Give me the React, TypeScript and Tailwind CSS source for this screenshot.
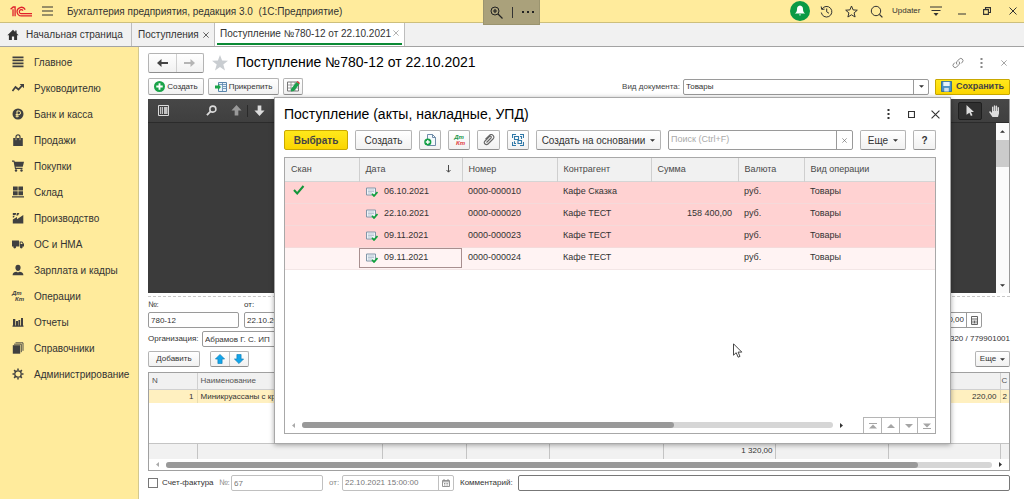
import React from 'react';
import clsx from 'clsx';

const Svg: React.FC<{ className?: string; box?: string; children: React.ReactNode }> = ({
  className = 'size-3',
  box = '0 0 12 12',
  children,
}) => (
  <svg viewBox={box} className={clsx('shrink-0', className)} fill="currentColor" aria-hidden="true">
    {children}
  </svg>
);

/* ---------- shared controls ---------- */

const btn =
  'flex shrink-0 items-center justify-center rounded-[2px] border border-[#b4b4b4] border-b-[#8f8f8f] bg-linear-to-b from-white to-[#f1f1f1]';

const field = 'rounded-[2px] border border-[#9a9a9a] bg-white';

const Caret: React.FC = () => (
  <Svg className="h-[3px] w-[5px]" box="0 0 6 3">
    <path d="M0 0h6L3 3z" />
  </Svg>
);

const Dots: React.FC = () => (
  <Svg className="h-[10px] w-[3px]" box="0 0 3 10">
    <path d="M.5 0h2v2h-2zM.5 4h2v2h-2zM.5 8h2v2h-2z" />
  </Svg>
);

const Cross: React.FC<{ className?: string }> = ({ className = 'size-2' }) => (
  <Svg className={className} box="0 0 8 8">
    <path d="M.5.5l7 7M7.5.5l-7 7" stroke="currentColor" strokeWidth="1" fill="none" />
  </Svg>
);

const DtKt: React.FC<{ className: string; second?: string }> = ({ className, second }) => (
  <span className={clsx('flex flex-col font-bold italic', className)} aria-hidden="true">
    <span>Дт</span>
    <span className={clsx('self-end', second)}>Кт</span>
  </span>
);

/* ---------- sections panel ---------- */

const sections: { label: string; icon: React.ReactNode }[] = [
  { label: 'Главное', icon: <Svg><path d="M.5.5h11v1.8H.5zM.5 3.4h11v1.8H.5zM.5 6.4h11v1.8H.5zM.5 9.4h11v1.8H.5z" /></Svg> },
  {
    label: 'Руководителю',
    icon: (
      <Svg>
        <path d="M.5 9l3-4 3 2.5L10 3.6" fill="none" stroke="currentColor" strokeWidth="1.7" />
        <path d="M7.6 2H12v4.3z" />
      </Svg>
    ),
  },
  {
    label: 'Банк и касса',
    icon: (
      <Svg>
        <circle cx="6" cy="6" r="5.5" />
        <path d="M5 9.5V3h1.8a1.7 1.7 0 010 3.6H3.6M3.6 8.2h3.2" fill="none" stroke="#ffeb9c" strokeWidth="1" />
      </Svg>
    ),
  },
  {
    label: 'Продажи',
    icon: (
      <Svg>
        <path d="M1.2 4h9.6v8H1.2z" />
        <path d="M4 6V2.8a2 2 0 014 0V6" fill="none" stroke="currentColor" strokeWidth="1.2" />
        <path d="M4 4.3v1.9M8 4.3v1.9" stroke="#ffeb9c" strokeWidth=".7" />
      </Svg>
    ),
  },
  {
    label: 'Покупки',
    icon: (
      <Svg>
        <path d="M0 .6h2.3l.5 1.2H12l-1.2 5H3.6l.3 1h6.6v1.1H3L1.6 1.8H0z" />
        <circle cx="4" cy="10.5" r="1.2" />
        <circle cx="9.5" cy="10.5" r="1.2" />
      </Svg>
    ),
  },
  {
    label: 'Склад',
    icon: <Svg><path d="M1 .5h4.7v4H1zM6.4.5H11v4H6.4zM1 5.2h4.7v4H1zM6.4 5.2H11v4H6.4zM0 10.2h12v1.4H0z" /></Svg>,
  },
  {
    label: 'Производство',
    icon: <Svg><path d="M.8 11.5V7.5L5 5v2.2L11.3 3v8.5zM.8 1h3.4l-.6 2H.8zM5 1h2.4L6 3.4H4.3zM.8 3.8h2L1.8 5.6h-1z" /></Svg>,
  },
  {
    label: 'ОС и НМА',
    icon: (
      <Svg>
        <path d="M0 2.5h7v6H0zM7.6 3.5h2.6L12 6v2.5H7.6z" />
        <path d="M8.6 4.4h1.2l.9 1.5H8.6z" fill="#ffeb9c" />
        <circle cx="2.7" cy="9" r="1.4" />
        <circle cx="9.3" cy="9" r="1.4" />
      </Svg>
    ),
  },
  {
    label: 'Зарплата и кадры',
    icon: (
      <Svg>
        <path d="M6 .8c1.700 0 2.600 1.200 2.600 2.900S7.500 7 6 7 3.400 5.400 3.400 3.700 4.300.8 6 .8z" />
        <path d="M.6 11.300c0-2.300 1.400-3.200 4-3.500L6 8.600l1.400-.8c2.600.3 4 1.200 4 3.500z" />
      </Svg>
    ),
  },
  { label: 'Операции', icon: <DtKt className="w-3 text-[6px] leading-[6px]" /> },
  {
    label: 'Отчеты',
    icon: <Svg><path d="M1 3h2.300v7H1zM4 5h2v5H4zM6.400 4h1.800v6H6.400zM9 2h2v8H9zM.5 9.600h11v1.200H.5z" /></Svg>,
  },
  {
    label: 'Справочники',
    icon: (
      <Svg>
        <path d="M.8 3.200h7.400v8.500H.8z" />
        <path d="M2 2.200h7.300v8M3.500.8H11v8" fill="none" stroke="currentColor" strokeWidth=".9" />
      </Svg>
    ),
  },
  {
    label: 'Администрирование',
    icon: (
      <Svg>
        <circle cx="6" cy="6" r="3.200" fill="none" stroke="currentColor" strokeWidth="1.300" />
        <path
          d="M6 .5v2M6 9.500v2M.5 6h2M9.500 6h2M2.100 2.100l1.500 1.500M8.400 8.400l1.500 1.500M9.900 2.100L8.400 3.600M3.600 8.400L2.100 9.900"
          stroke="currentColor"
          strokeWidth="1.500"
        />
      </Svg>
    ),
  },
];

const SectionsPanel: React.FC = () => (
  <nav className="w-[139px] shrink-0 border-r border-[#d3c88f] bg-[#ffeb9c] pt-[2px]">
    <ul>
      {sections.map((s) => (
        <li key={s.label}>
          <a href="#" className="flex h-[26px] items-center gap-[10px] pl-3 text-[10px] text-[#333]">
            <span className="flex w-3 justify-center text-[#404040]">{s.icon}</span>
            {s.label}
          </a>
        </li>
      ))}
    </ul>
  </nav>
);

/* ---------- top bars ---------- */

const Logo: React.FC = () => (
  <svg viewBox="0 0 22 11" className="h-[11px] w-[22px] shrink-0" fill="none" stroke="#e0212b" aria-label="1С">
    <path d="M.6 3.300L3.200 1h1.900v9.200M3 3.200v7" strokeWidth="1.300" />
    <path d="M15.200 3.600A4.300 4.300 0 1011.300 9.900H22" strokeWidth="1.300" />
    <path d="M13 4.600A2 2 0 1011.300 7.700H22" strokeWidth="1.200" />
  </svg>
);

const TitleBar: React.FC = () => (
  <header className="relative flex h-[23px] shrink-0 items-center border-b border-[#cdbf7c] bg-[#ffeb9c] pl-[10px] pr-[7px] text-[#333]">
    <Logo />
    <button className="ml-[10px]" title="Меню">
      <Svg className="h-[10px] w-[11px]" box="0 0 11 10">
        <path d="M0 1h11M0 5h11M0 9h11" stroke="currentColor" strokeWidth="1" />
      </Svg>
    </button>
    <span className="ml-[14px] whitespace-pre text-[10px]">Бухгалтерия предприятия, редакция 3.0  (1С:Предприятие)</span>

    <div className="ml-auto flex items-center">
      <button className="flex size-5 items-center justify-center rounded-full bg-[#0b9a45] text-white" title="Уведомления">
        <Svg>
          <path d="M6 .6c2.200.4 3 1.800 3 3.600 0 2 .6 3.200 2.200 4.400H.8C2.400 7.400 3 6.200 3 4.200 3 2.400 3.800 1 6 .6zM4.800 9.400h2.400L6 10.800z" />
        </Svg>
      </button>
      <button className="ml-[10px]" title="История">
        <Svg className="size-[13px]" box="0 0 13 13">
          <path d="M2 4A5.300 5.300 0 111.300 7.500M1.200 1.500L1.700 4.400l2.900-.3M6.700 3.500v3.300l2.300 1.500" fill="none" stroke="currentColor" strokeWidth="1" />
        </Svg>
      </button>
      <button className="ml-3" title="Избранное">
        <Svg className="size-[13px]" box="0 0 13 13">
          <path d="M6.500 1l1.600 3.900 4.200.3-3.200 2.700 1 4.100-3.600-2.200L2.900 12l1-4.100L.7 5.200l4.200-.3z" fill="none" stroke="currentColor" strokeWidth="1" />
        </Svg>
      </button>
      <button className="ml-3" title="Поиск">
        <Svg className="size-[13px]" box="0 0 13 13">
          <circle cx="6" cy="6" r="4.700" fill="none" stroke="currentColor" strokeWidth="1" />
          <path d="M9.400 9.400l3 3" stroke="currentColor" strokeWidth="1.300" />
        </Svg>
      </button>
      <a href="#" className="ml-[9px] w-[30px] text-[8px]">Updater</a>
      <button className="ml-2" title="Настройка панелей">
        <Svg className="h-[10px] w-3" box="0 0 12 10">
          <path d="M0 1h12M1.500 4.500h9" stroke="currentColor" strokeWidth="1" />
          <path d="M3.500 7h5L6 10z" />
        </Svg>
      </button>
      <button className="ml-4" title="Свернуть">
        <Svg className="size-2" box="0 0 8 8"><path d="M0 6.500h8v1H0z" /></Svg>
      </button>
      <button className="ml-[17px]" title="Восстановить">
        <Svg className="size-2" box="0 0 8 8">
          <path d="M.6 2.600h4.800v4.800H.6zM2.500 2.600V.6h5v4.900h-2" fill="none" stroke="currentColor" strokeWidth="1.100" />
        </Svg>
      </button>
      <button className="ml-[18px]" title="Закрыть"><Cross /></button>
    </div>

    <div className="absolute left-[483px] top-0 z-20 flex h-[25px] w-[57px] items-center justify-center gap-[9px] border border-t-0 border-[#9b946f] bg-[#aaa17b] text-[#222]">
      <Svg className="size-[13px]" box="0 0 13 13">
        <circle cx="5" cy="5" r="4" fill="none" stroke="currentColor" strokeWidth="1" />
        <path d="M8 8l4.500 4.500M5 3v4M3 5h4" stroke="currentColor" strokeWidth="1.200" />
      </Svg>
      <span className="h-[11px] w-px bg-[#333]" />
      <Svg className="h-[2px] w-3" box="0 0 12 2"><path d="M0 0h2v2H0zM5 0h2v2H5zM10 0h2v2h-2z" /></Svg>
    </div>
  </header>
);

const TabsBar: React.FC = () => (
  <div className="flex h-6 shrink-0 whitespace-nowrap border-b border-[#a3a3a3] bg-[#f1f1f1] text-[10px] text-[#333]">
    <a href="#" className="flex w-[132px] shrink-0 items-center gap-[7px] border-r border-[#bdbdbd] pl-[7px]">
      <Svg className="size-3">
        <path d="M6 .8L.4 6.200h1.500V11h3V7.500h2.200V11h3V6.200h1.500L9.600 4.200V1.500H8.200v1.400z" />
      </Svg>
      Начальная страница
    </a>
    <div className="flex w-[83px] shrink-0 items-center justify-between border-r border-[#bdbdbd] pl-[6px] pr-[5px]">
      <a href="#">Поступления</a>
      <button title="Закрыть"><Cross className="size-[6px]" /></button>
    </div>
    <div className="flex w-[190px] shrink-0 border-r border-[#bdbdbd] bg-white px-[2px]">
      <div className="flex h-[22px] flex-1 items-center justify-between border-b-2 border-[#0b8a35] px-[3px]">
        <a href="#">Поступление №780-12 от 22.10.2021</a>
        <button className="text-[#999]" title="Закрыть"><Cross className="size-[6px]" /></button>
      </div>
    </div>
  </div>
);

/* ---------- document form ---------- */

const Arrow: React.FC<{ className?: string }> = ({ className }) => (
  <Svg className={clsx('h-2 w-[11px]', className)} box="0 0 11 8">
    <path d="M4.500 0v3H11v2H4.500v3L0 4z" />
  </Svg>
);

const DocumentHead: React.FC = () => (
  <div className="flex h-[31px] items-center">
    <div className="flex h-5 w-[56px] rounded-[2px] border border-[#b4b4b4] border-b-[#8f8f8f] bg-linear-to-b from-white to-[#f1f1f1]">
      <button className="flex flex-1 items-center justify-center border-r border-[#d0d0d0] text-[#444]" title="Назад"><Arrow /></button>
      <button className="flex flex-1 items-center justify-center text-[#b5b5b5]" title="Вперед"><Arrow className="rotate-180" /></button>
    </div>
    <button className="ml-2 text-[#c9cdd1]" title="В избранное">
      <Svg className="size-4" box="0 0 16 16"><path d="M8 0l2.100 5.600 5.900.2-4.700 3.700L13 15.500 8 12l-5 3.500 1.700-6L0 5.800l5.900-.2z" /></Svg>
    </button>
    <h1 className="ml-2 text-[14px] text-black">Поступление №780-12 от 22.10.2021</h1>
    <div className="ml-auto flex items-center text-[#888]">
      <button title="Ссылка">
        <Svg className="size-3">
          <path d="M5 7.500a2.300 2.300 0 010-3L7.300 2a2.200 2.200 0 013.200 3L9 6.500M7 4.500a2.300 2.300 0 010 3L4.700 10a2.200 2.200 0 01-3.200-3L3 5.500" fill="none" stroke="currentColor" strokeWidth="1" />
        </Svg>
      </button>
      <button className="ml-4" title="Еще"><Dots /></button>
      <button className="ml-[18px] mr-[3px]" title="Закрыть"><Cross className="size-[6px]" /></button>
    </div>
  </div>
);

const DocumentCommands: React.FC = () => (
  <div className="flex h-[17px] items-center text-[8px] text-[#333]">
    <button className={clsx(btn, 'h-[17px] w-[56px] gap-[2px]')}>
      <Svg className="size-[11px]">
        <circle cx="6" cy="6" r="6" fill="#19a348" />
        <path d="M6 2.500v7M2.500 6h7" stroke="#fff" strokeWidth="2" />
      </Svg>
      Создать
    </button>
    <button className={clsx(btn, 'ml-1 h-[17px] w-[71px] gap-[2px]')}>
      <Svg className="h-[10px] w-3" box="0 0 12 10">
        <path d="M3.500.5h8v9h-8z" fill="#eaf3fa" stroke="#5b87ad" />
        <path d="M4 2.500h7.500M7.500 1v8M8 4.500h3M8 6.500h3" stroke="#5b87ad" strokeWidth=".8" />
        <path d="M0 3.500h3V2l3 3-3 3V6.500H0z" fill="#19a348" />
      </Svg>
      Прикрепить
    </button>
    <button className={clsx(btn, 'ml-1 h-[17px] w-5')} title="Изменить">
      <Svg className="h-[11px] w-[13px]" box="0 0 13 11">
        <path d="M.5 1h11v9H.5z" fill="#fff" stroke="#777" />
        <path d="M1 4h10M1 7h10M4 1v9M8 1v9" stroke="#888" strokeWidth=".8" />
        <path d="M4 8l5.500-7 3 2L7 10l-3 .6z" fill="#1da04c" />
        <path d="M9.500 1l1-1L13 2l-.6 1z" fill="#d33" />
      </Svg>
    </button>
    <label htmlFor="docKind" className="ml-auto text-[#444]">Вид документа:</label>
    <div className={clsx(field, 'ml-[3px] flex h-4 w-[246px]')}>
      <select id="docKind" className="min-w-0 flex-1 appearance-none pl-[2px] outline-none">
        <option>Товары</option>
      </select>
      <span className="flex w-[15px] items-center justify-center border-l border-[#9a9a9a]"><Caret /></span>
    </div>
    <button className="ml-[6px] flex h-4 w-[75px] shrink-0 items-center justify-center gap-1 rounded-[1px] border border-[#c9a800] bg-linear-to-b from-[#ffe81a] to-[#fbd500] text-[9px] font-bold text-[#444]">
      <Svg className="size-[11px]">
        <path d="M.5.5h11v11h-11z" fill="#4a90c4" stroke="#2d6b98" />
        <path d="M2.500 1h7v4.500h-7z" fill="#e8f3fb" />
        <path d="M3.500 7.500h5v4h-5z" fill="#cfe0ee" />
      </Svg>
      Сохранить
    </button>
  </div>
);

const ScanViewer: React.FC = () => (
  <div className="mt-1 h-[194px] border-r border-[#999] bg-[#3b3b3b]">
    <div className="flex h-6 items-center border-b border-[#2b2b2b] bg-linear-to-b from-[#474747] to-[#3f3f3f] pl-[10px] pr-[8px] text-[#dcdcdc]">
      <button title="Боковая панель">
        <Svg className="size-[11px]" box="0 0 11 11">
          <path d="M.5.500h10v10H.5z" fill="none" stroke="currentColor" />
          <path d="M2 2h1.300v7H2zM4 2h1v7H4zM6 2h3.500v7H6z" fillOpacity=".85" />
        </Svg>
      </button>
      <button className="ml-[37px]" title="Найти">
        <Svg className="size-[11px]">
          <circle cx="7.500" cy="4.500" r="3.300" fill="none" stroke="currentColor" strokeWidth="1.700" />
          <path d="M5 7l-4 4" stroke="currentColor" strokeWidth="2" />
        </Svg>
      </button>
      <button className="ml-[14px] text-[#999]" title="Предыдущая страница">
        <Svg className="size-[11px]"><path d="M6 0l5.500 6H8v5.500H4V6H.5z" /></Svg>
      </button>
      <span className="ml-[5px] h-3 w-px bg-[#2a2a2a]" />
      <button className="ml-[6px]" title="Следующая страница">
        <Svg className="size-[11px]"><path d="M6 12L.5 6H4V.5h4V6h3.500z" /></Svg>
      </button>
      <button className="ml-auto flex h-[18px] w-6 items-center justify-center rounded-[2px] border border-[#1f1f1f] bg-[#303030]" title="Выделение">
        <Svg className="h-[11px] w-2" box="0 0 8 11"><path d="M.5 0L8 7H5l1.500 3.300-1.600.7L3.400 7.700.5 9.800z" /></Svg>
      </button>
      <button className="ml-[7px]" title="Рука">
        <Svg className="size-3">
          <path d="M3.500 12L.3 7.500c-.5-.9.600-1.600 1.300-.9L3 8V2.200c0-1 1.300-1 1.300 0V6h.5V1c0-1 1.400-1 1.400 0v5h.5V1.300c0-1 1.400-1 1.400 0V6h.5V2.800c0-1 1.400-1 1.400 0V8.500L9 12z" />
        </Svg>
      </button>
    </div>
    <div className="ml-auto flex h-[170px] w-[13px] flex-col items-center bg-[#fafafa] text-[#333]">
      <span className="flex h-[17px] items-center"><Svg className="h-[3px] w-[5px]" box="0 0 6 3"><path d="M0 3h6L3 0z" /></Svg></span>
      <span className="h-[27px] w-full bg-[#cbcbcb]" />
      <span className="mt-auto flex h-[15px] items-center"><Caret /></span>
    </div>
  </div>
);

const CalcIcon: React.FC = () => (
  <Svg className="h-[9px] w-[7px]" box="0 0 7 9">
    <path d="M.5.500h6v8h-6zM1 3h5M2 4.500v3M3.500 4.500v3M5 4.500v3" fill="none" stroke="#555" strokeWidth=".9" />
  </Svg>
);

const DocumentFields: React.FC = () => (
  <div className="mt-[3px] border-t border-dashed border-[#c8c8c8] text-[8px] text-[#333]">
    <div className="flex items-end pt-[3px]">
      <div className="w-[91px]">
        <label htmlFor="num" className="block h-3 leading-[10px]">№:</label>
        <input id="num" defaultValue="780-12" className={clsx(field, 'h-4 w-full px-[2px]')} />
      </div>
      <div className="ml-[5px] w-[120px]">
        <label htmlFor="docDate" className="block h-3 leading-[10px]">от:</label>
        <input id="docDate" defaultValue="22.10.2021 0:00:00" className={clsx(field, 'h-4 w-full px-[2px]')} />
      </div>
      <div className={clsx(field, 'ml-auto mr-[28px] flex h-4 w-[120px]')}>
        <input aria-label="Сумма" defaultValue="0,00" className="min-w-0 flex-1 pr-[2px] text-right" />
        <button className="flex w-[15px] items-center justify-center border-l border-[#9a9a9a]" title="Калькулятор"><CalcIcon /></button>
      </div>
    </div>
    <div className="mt-[3px] flex h-4 items-center">
      <label htmlFor="org" className="w-[54px] whitespace-nowrap">Организация:</label>
      <input id="org" defaultValue="Абрамов Г. С. ИП" className={clsx(field, 'h-4 w-[200px] px-[2px]')} />
      <span className="ml-auto">7799012320 / 779901001</span>
    </div>
    <div className="mt-[4px] flex h-4 items-center">
      <button className={clsx(btn, 'h-4 w-[52px]')}>Добавить</button>
      <div className={clsx(btn, 'ml-[10px] h-4 w-[39px] text-[#12a5ea]')}>
        <button className="flex h-full flex-1 items-center justify-center border-r border-[#c4c4c4]" title="Вверх">
          <Svg className="size-[10px]"><path d="M6 .5L11.500 6H8.500v5.500h-5V6H.5z" stroke="#0d7db5" strokeWidth=".8" /></Svg>
        </button>
        <button className="flex h-full flex-1 items-center justify-center" title="Вниз">
          <Svg className="size-[10px]"><path d="M6 11.500L.5 6h3V.5h5V6h3z" stroke="#0d7db5" strokeWidth=".8" /></Svg>
        </button>
      </div>
      <button className={clsx(btn, 'ml-auto h-4 w-[35px] gap-[4px]')}>Еще <Caret /></button>
    </div>
  </div>
);

const HScroll: React.FC<{ thumb: string; className?: string }> = ({ thumb, className }) => (
  <div className={clsx('flex items-center', className)}>
    <Svg className="h-[5px] w-[3px] text-[#aaa]" box="0 0 3 5"><path d="M3 0v5L0 2.500z" /></Svg>
    <div className="mx-[7px] h-[6px] flex-1 rounded-full bg-[#d6d6d6]">
      <div className={clsx('h-full rounded-full bg-[#999]', thumb)} />
    </div>
    <Svg className="h-[5px] w-[3px] text-[#333]" box="0 0 3 5"><path d="M0 0v5l3-2.500z" /></Svg>
  </div>
);

const GoodsTable: React.FC = () => {
  const head = ['N', 'Наименование', '', '', '', '', '', '', 'С'];
  const row = ['1', 'Миникруассаны с кремом', '', '', '', '', '', '220,00', '2'];
  return (
    <div className="mt-[5px] overflow-hidden border border-[#a0a0a0] text-[8px] text-[#333]">
      <table className="w-full table-fixed border-collapse">
        <colgroup>
          <col className="w-[48px]" />
          <col className="w-[185px]" />
          <col className="w-[84px]" />
          <col className="w-[83px]" />
          <col className="w-[114px]" />
          <col className="w-[112px]" />
          <col className="w-[113px]" />
          <col />
          <col className="w-[9px]" />
        </colgroup>
        <thead>
          <tr className="h-4 bg-[#f1f1f1] text-[#555]">
            {head.map((h, i) => (
              <th
                key={i}
                className={clsx(
                  'whitespace-nowrap border-b border-[#d0d0d0] pr-0 text-left font-normal',
                  i > 0 && 'border-l',
                  i === 8 ? 'pl-px' : 'pl-[3px]',
                )}
              >
                {h}
              </th>
            ))}
          </tr>
        </thead>
        <tbody>
          <tr className="h-[14px] bg-[#fff0c0]">
            {row.map((c, i) => (
              <td
                key={i}
                className={clsx(
                  'whitespace-nowrap leading-[13px]',
                  i > 0 && 'border-l border-[#e8dcae]',
                  (i === 0 || i === 7) && 'text-right',
                  i === 8 ? 'pl-[2px]' : 'px-[3px]',
                )}
              >
                {c}
              </td>
            ))}
          </tr>
          <tr className="h-[40px]"><td colSpan={9} /></tr>
        </tbody>
        <tfoot>
          <tr className="h-4 border-t border-[#c4c4c4] bg-[#f1f1f1]">
            {head.map((_, i) => (
              <td key={i} className={clsx('px-[2px] text-right leading-[14px]', i > 0 && 'border-l border-[#c4c4c4]')}>
                {i === 5 && '1 320,00'}
              </td>
            ))}
          </tr>
        </tfoot>
      </table>
      <HScroll className="h-[11px] px-[7px]" thumb="w-[91%]" />
    </div>
  );
};

const DocumentFooter: React.FC = () => (
  <div className="mt-[4px] flex h-4 items-center text-[8px] text-[#333]">
    <input id="invoice" type="checkbox" className="size-[10px] shrink-0 appearance-none border border-[#777] bg-white" />
    <label htmlFor="invoice" className="ml-1 w-[57px] whitespace-nowrap">Счет-фактура</label>
    <label htmlFor="invNum" className="w-3 text-[#888]">№:</label>
    <input id="invNum" defaultValue="67" className="h-4 w-[92px] rounded-[2px] border border-[#c0c0c0] px-[2px] text-[#777]" />
    <label htmlFor="invDate" className="ml-[6px] w-[13px] text-[#888]">от:</label>
    <div className="flex h-4 w-[112px] rounded-[2px] border border-[#c0c0c0]">
      <input id="invDate" defaultValue="22.10.2021 15:00:00" className="min-w-0 flex-1 px-[2px] text-[#777]" />
      <button className="flex w-[15px] items-center justify-center border-l border-[#c0c0c0]" title="Календарь">
        <Svg className="size-2" box="0 0 8 8">
          <path d="M.5 1.500h7v6h-7zM1 2.800h6M2 0v2M6 0v2M2 4.500h1M3.600 4.500h1M5.200 4.500h1M2 6h1M3.600 6h1M5.200 6h1" fill="none" stroke="#888" strokeWidth=".9" />
        </Svg>
      </button>
    </div>
    <label htmlFor="comment" className="ml-[6px] w-[58px] whitespace-nowrap">Комментарий:</label>
    <input id="comment" className="h-4 min-w-0 flex-1 rounded-[2px] border border-[#777] px-[2px]" />
  </div>
);

/* ---------- selection dialog ---------- */

const receipts = [
  { scan: true, date: '06.10.2021', num: '0000-000010', partner: 'Кафе Сказка', sum: '' },
  { scan: false, date: '22.10.2021', num: '0000-000020', partner: 'Кафе ТЕСТ', sum: '158 400,00' },
  { scan: false, date: '09.11.2021', num: '0000-000023', partner: 'Кафе ТЕСТ', sum: '' },
  { scan: false, date: '09.11.2021', num: '0000-000024', partner: 'Кафе ТЕСТ', sum: '' },
];

const PostedIcon: React.FC = () => (
  <Svg className="h-[10px] w-3" box="0 0 12 10">
    <path d="M.5 1h9v7h-9z" fill="#eef3f8" stroke="#8296a8" />
    <path d="M2 3h6M2 4.500h6M2 6h4" stroke="#a3b4c4" strokeWidth=".7" />
    <path d="M6 6.800l2 2.200L11.500 5" fill="none" stroke="#0fa23c" strokeWidth="1.700" />
  </Svg>
);

const ReceiptsTable: React.FC = () => {
  const th = 'border-r border-[#cfcfcf] pl-[6px] text-left font-normal last:border-r-0';
  return (
    <table className="w-full table-fixed border-collapse text-[9px] text-[#333]">
      <colgroup>
        <col className="w-[74px]" />
        <col className="w-[103px]" />
        <col className="w-[95px]" />
        <col className="w-[94px]" />
        <col className="w-[87px]" />
        <col className="w-[66px]" />
        <col />
      </colgroup>
      <thead>
        <tr className="h-[23px] border-b border-[#d5d5d5] bg-[#f1f1f1] text-[#4a4a4a]">
          <th className={th}>Скан</th>
          <th className={th}>
            <span className="flex items-center justify-between pr-[11px]">
              Дата
              <Svg className="h-2 w-[5px]" box="0 0 5 8">
                <path d="M2.500 0v7M.5 5l2 2.200 2-2.200" fill="none" stroke="currentColor" strokeWidth="1" />
              </Svg>
            </span>
          </th>
          <th className={th}>Номер</th>
          <th className={th}>Контрагент</th>
          <th className={th}>Сумма</th>
          <th className={th}>Валюта</th>
          <th className={th}>Вид операции</th>
        </tr>
      </thead>
      <tbody>
        {receipts.map((r, i) => {
          const current = i === receipts.length - 1;
          return (
            <tr key={r.num} className={clsx('h-[22px] border-b', current ? 'border-[#f3e6e6] bg-[#fff3f3]' : 'border-[#f5dada] bg-[#ffd2d2]')}>
              <td className="pl-2">
                {r.scan && (
                  <Svg className="mb-1 h-[10px] w-3" box="0 0 12 10">
                    <path d="M1 5l3.200 3.500L10.500 1" fill="none" stroke="#12963a" strokeWidth="2" />
                  </Svg>
                )}
              </td>
              <td className="p-0">
                <span className={clsx('flex h-[20px] items-center gap-[6px] border pl-[6px]', current ? 'border-[#a88f8f]' : 'border-transparent')}>
                  <PostedIcon />
                  {r.date}
                </span>
              </td>
              <td className="pl-[6px]">{r.num}</td>
              <td className="pl-[6px]">{r.partner}</td>
              <td className="pr-[6px] text-right">{r.sum}</td>
              <td className="pl-[6px]">руб.</td>
              <td className="pl-[6px]">Товары</td>
            </tr>
          );
        })}
      </tbody>
    </table>
  );
};

const moves = [
  { title: 'В начало', d: 'M0 0h8v1H0zM4 1.500L8 5.500H0z' },
  { title: 'Вверх', d: 'M4 1L8 5H0z' },
  { title: 'Вниз', d: 'M4 5L0 1h8z' },
  { title: 'В конец', d: 'M0 5h8v1H0zM4 4.500L0 .5h8z' },
];

const ReceiptsDialog: React.FC = () => (
  <section
    role="dialog"
    aria-label="Поступление"
    className="absolute left-[274px] right-[73px] top-[97px] z-10 flex h-[347px] flex-col border border-[#a8a8a8] bg-white pb-[9px] pl-[9px] text-[#333] shadow-[0_1px_5px_rgba(0,0,0,0.35)]"
  >
    <div className="flex h-8 shrink-0 items-center pr-[10px]">
      <h2 className="text-[14px] text-black">Поступление (акты, накладные, УПД)</h2>
      <button className="ml-auto" title="Еще"><Dots /></button>
      <button className="ml-[18px]" title="Развернуть">
        <Svg className="size-[7px]" box="0 0 7 7"><path d="M.5.500h6v6h-6z" fill="none" stroke="currentColor" strokeWidth="1.200" /></Svg>
      </button>
      <button className="ml-4" title="Закрыть"><Cross className="size-[9px]" /></button>
    </div>

    <div className="mr-[14px] flex h-5 shrink-0 gap-[7px] text-[10px]">
      <button className="flex w-[64px] shrink-0 items-center justify-center rounded-[2px] border border-[#c9a800] bg-linear-to-b from-[#ffe81a] to-[#fbd500] font-bold text-[#444]">
        Выбрать
      </button>
      <button className={clsx(btn, 'w-[57px]')}>Создать</button>
      <button className={clsx(btn, 'w-[22px]')} title="Скопировать">
        <Svg className="size-3">
          <path d="M3.500.5h5l3 3v8h-8zM8.500.5v3h3" fill="#f3f8fc" stroke="#5f7f9f" strokeWidth=".9" />
          <circle cx="3.800" cy="8" r="3.600" fill="#14a045" />
          <path d="M3.800 6v4M1.800 8h4" stroke="#fff" strokeWidth="1.300" />
        </Svg>
      </button>
      <button className={clsx(btn, 'w-[22px]')} title="Проводки">
        <DtKt className="w-3 text-[6px] leading-[6px] text-[#17964a]" second="text-[#e03a3a]" />
      </button>
      <button className={clsx(btn, 'w-[23px] text-[#666]')} title="Файлы">
        <Svg className="size-3">
          <path d="M3.500 8.500L8 4a1 1 0 00-1.500-1.500L2 7a2.100 2.100 0 003 3l5-5a2.500 2.500 0 00-3.600-3.600L2.500 5.200" fill="none" stroke="currentColor" strokeWidth="1.100" />
        </Svg>
      </button>
      <button className={clsx(btn, 'w-[22px] text-[#2f78a8]')} title="Структура подчиненности">
        <Svg>
          <path d="M.5 4V.5H4M8 .5h3.500V4M11.500 8v3.500H8M4 11.500H.5V8M2.500 2.500h4v3h-4zM6 6.500h3.500v3H6zM8 2.500h1.500v2.500M2.500 7.200v2.300H4" fill="none" stroke="currentColor" strokeWidth="1.100" />
        </Svg>
      </button>
      <button className={clsx(btn, 'w-[125px] gap-[5px]')}>Создать на основании <Caret /></button>
      <div className={clsx(field, 'flex min-w-0 flex-1 text-[9px]')}>
        <input aria-label="Поиск" placeholder="Поиск (Ctrl+F)" className="min-w-0 flex-1 pl-[2px] placeholder:text-[#aaa]" />
        <button className="flex w-4 items-center justify-center border-l border-[#9a9a9a] text-[#666]" title="Очистить"><Cross className="size-[5px]" /></button>
      </div>
      <button className={clsx(btn, 'w-[46px] gap-[5px]')}>Еще <Caret /></button>
      <button className={clsx(btn, 'w-[23px] font-bold')} title="Справка">?</button>
    </div>

    <div className="mr-[14px] mt-[7px] flex min-h-0 flex-1 flex-col border border-[#a8a8a8]">
      <ReceiptsTable />
      <div className="mt-auto flex h-4">
        <HScroll className="flex-1 pl-[7px] pr-[20px]" thumb="w-[70%]" />
        <div className="flex border-t border-[#b5b5b5] text-[#a5a5a5]">
          {moves.map((m) => (
            <button key={m.title} title={m.title} className="flex w-[18px] items-center justify-center border-l border-[#b5b5b5]">
              <Svg className="h-[6px] w-2" box="0 0 8 6"><path d={m.d} /></Svg>
            </button>
          ))}
        </div>
      </div>
    </div>
  </section>
);

const Pointer: React.FC = () => (
  <svg viewBox="0 0 10 15" className="absolute left-[733px] top-[343px] z-30 h-[15px] w-[10px]" aria-hidden="true">
    <path d="M.5.800v11.400l2.700-2.500 1.900 4.500 1.900-.8-1.900-4.300h3.700z" fill="#fff" stroke="#333" strokeWidth=".9" />
  </svg>
);

export default function App() {
  return (
    <div className="relative flex min-h-screen flex-col bg-white font-['Liberation_Sans',Arial,sans-serif]">
      <TitleBar />
      <TabsBar />
      <div className="flex flex-1">
        <SectionsPanel />
        <main className="min-w-0 flex-1 pl-[9px] pr-[14px]">
          <DocumentHead />
          <DocumentCommands />
          <ScanViewer />
          <DocumentFields />
          <GoodsTable />
          <DocumentFooter />
        </main>
      </div>
      <ReceiptsDialog />
      <Pointer />
    </div>
  );
}
